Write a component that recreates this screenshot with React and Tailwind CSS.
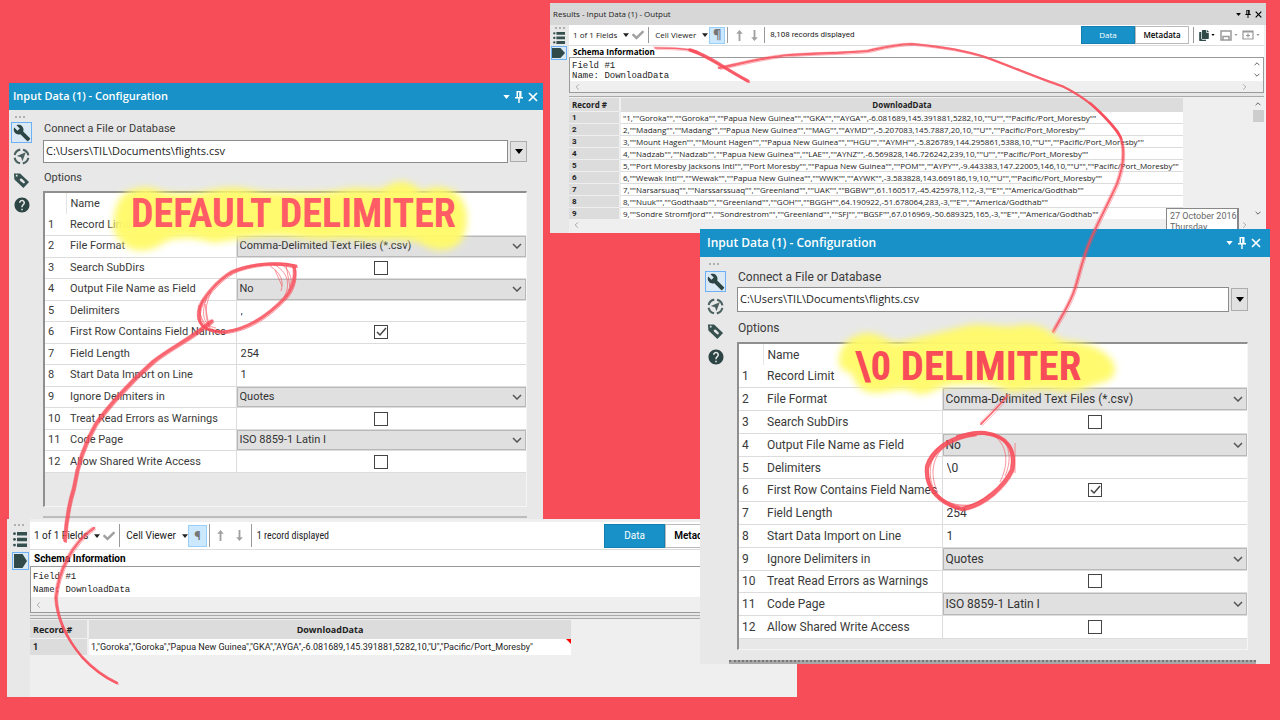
import React from 'react'
import clsx from 'clsx'
import { MdBuild, MdHelp } from 'react-icons/md'
import { FaCopy, FaCheck } from 'react-icons/fa'

const options = [
  { name: 'Record Limit', type: 'text', value: '' },
  { name: 'File Format', type: 'select', value: 'Comma-Delimited Text Files (*.csv)' },
  { name: 'Search SubDirs', type: 'check', value: false },
  { name: 'Output File Name as Field', type: 'select', value: 'No' },
  { name: 'Delimiters', type: 'text', value: ',' },
  { name: 'First Row Contains Field Names', type: 'check', value: true },
  { name: 'Field Length', type: 'text', value: '254' },
  { name: 'Start Data Import on Line', type: 'text', value: '1' },
  { name: 'Ignore Delimiters in', type: 'select', value: 'Quotes' },
  { name: 'Treat Read Errors as Warnings', type: 'check', value: false },
  { name: 'Code Page', type: 'select', value: 'ISO 8859-1 Latin I' },
  { name: 'Allow Shared Write Access', type: 'check', value: false },
]

const allRecords = [
  '"1,""Goroka"",""Goroka"",""Papua New Guinea"",""GKA"",""AYGA"",-6.081689,145.391881,5282,10,""U"",""Pacific/Port_Moresby""',
  '2,""Madang"",""Madang"",""Papua New Guinea"",""MAG"",""AYMD"",-5.207083,145.7887,20,10,""U"",""Pacific/Port_Moresby""',
  '3,""Mount Hagen"",""Mount Hagen"",""Papua New Guinea"",""HGU"",""AYMH"",-5.826789,144.295861,5388,10,""U"",""Pacific/Port_Moresby""',
  '4,""Nadzab"",""Nadzab"",""Papua New Guinea"",""LAE"",""AYNZ"",-6.569828,146.726242,239,10,""U"",""Pacific/Port_Moresby""',
  '5,""Port Moresby Jacksons Intl"",""Port Moresby"",""Papua New Guinea"",""POM"",""AYPY"",-9.443383,147.22005,146,10,""U"",""Pacific/Port_Moresby""',
  '6,""Wewak Intl"",""Wewak"",""Papua New Guinea"",""WWK"",""AYWK"",-3.583828,143.669186,19,10,""U"",""Pacific/Port_Moresby""',
  '7,""Narsarsuaq"",""Narssarssuaq"",""Greenland"",""UAK"",""BGBW"",61.160517,-45.425978,112,-3,""E"",""America/Godthab""',
  '8,""Nuuk"",""Godthaab"",""Greenland"",""GOH"",""BGGH"",64.190922,-51.678064,283,-3,""E"",""America/Godthab""',
  '9,""Sondre Stromfjord"",""Sondrestrom"",""Greenland"",""SFJ"",""BGSF"",67.016969,-50.689325,165,-3,""E"",""America/Godthab""',
]

const oneRecord = [
  '1,"Goroka","Goroka","Papua New Guinea","GKA","AYGA",-6.081689,145.391881,5282,10,"U","Pacific/Port_Moresby"',
]

const Caret = ({ className }) => (
  <svg className={className} viewBox="0 0 8 5" fill="currentColor">
    <path d="M0 0h8L4 5z" />
  </svg>
)

const Chevron = ({ className }) => (
  <svg className={className} viewBox="0 0 10 6" fill="none" stroke="currentColor" strokeWidth="1.5">
    <path d="M1 1l4 4 4-4" />
  </svg>
)

const Pin = ({ className }) => (
  <svg className={className} viewBox="0 0 8 12" fill="currentColor">
    <path d="M1.5 0h5v6H8v1.500H4.700V12H3.300V7.500H0V6h1.500zM3 1.200V6h1.200V1.200z" fillRule="evenodd" />
  </svg>
)

const Cross = ({ className }) => (
  <svg className={className} viewBox="0 0 10 10" fill="none" stroke="currentColor" strokeWidth="1.700">
    <path d="M1 1l8 8M9 1l-8 8" />
  </svg>
)

const Dots = () => (
  <div className="flex gap-[2px] h-[2px]">
    <span className="w-[2px] h-[2px] bg-[#b0b0b0]" />
    <span className="w-[2px] h-[2px] bg-[#b0b0b0]" />
    <span className="w-[2px] h-[2px] bg-[#b0b0b0]" />
  </div>
)

const TargetIcon = () => (
  <svg className="w-[17px] h-[17px]" viewBox="0 0 18 18">
    <circle cx="9" cy="9" r="7.400" fill="none" stroke="#4a6160" strokeWidth="2.200" strokeDasharray="8.600 3" strokeDashoffset="-1.500" />
    <path d="M13.500 4.500L10 14 8.500 9.800 4 8.500z" fill="#4a6160" />
  </svg>
)

const TagIcon = () => (
  <svg className="w-[17px] h-[17px]" viewBox="0 0 18 18">
    <path
      d="M1 1.500L7.500 1.500 17 10.500 11 17 1.500 8zM3 3v1.800h1.800V3zM7 7.800q1.500-2 3 0l2.500 2.600q.5 1.600-1.200 1.800L7.800 9.600z"
      fill="#35504e"
      fillRule="evenodd"
    />
  </svg>
)

const ListIcon = ({ className }) => (
  <svg className={className} viewBox="0 0 14 15" fill="#35504e" preserveAspectRatio="none">
    <path d="M4 0h10v3.500H4zM4 5.700h10v3.500H4zM4 11.400h10v3.500H4z" />
    <circle cx="1.500" cy="1.700" r="1.400" />
    <circle cx="1.500" cy="7.400" r="1.400" />
    <circle cx="1.500" cy="13.100" r="1.400" />
  </svg>
)

const PortIcon = () => (
  <svg className="w-[13px] h-full py-px" viewBox="0 0 13 13" preserveAspectRatio="none">
    <path d="M0 0h8.500L13 6.500 8.500 13H0z" fill="#2f4a49" />
  </svg>
)

const Arrow = ({ up }) => (
  <svg className={clsx('w-[7px] h-[11px]', !up && 'rotate-180')} viewBox="0 0 7 12" fill="#a0a0a0">
    <path d="M3.500 0L7 4H4.500v8h-2V4H0z" />
  </svg>
)

const sizes = {
  sm: {
    title: 'h-[27px] pl-[4px] pr-[5px] text-[11px]',
    body: 'pt-[11px] pr-4 pb-[13px]',
    side: 'w-[34px] pt-[6px] pl-[2px]',
    wrench: 'mt-[4px]',
    tools: 'mt-[5px] gap-[7px]',
    label: 'text-[11px] h-5',
    text: 'text-[11px]',
    path: 'h-[23px]',
    gap: 'h-[28px] pt-[2px]',
    table: 'h-[280px]',
    num: 'w-[21px]',
    name: 'w-[170px]',
    tail: 'h-[33px]',
    rule: 'h-[2px] mt-[9px] bg-[#bdbdbd]',
  },
  lg: {
    title: 'h-[28px] pl-[7px] pr-[9px] text-[12px]',
    body: 'pt-[11px] pr-[22px] pb-0',
    side: 'w-[37px] pt-[6px] pl-[5px]',
    wrench: 'mt-[6px]',
    tools: 'mt-[6px] gap-[8px]',
    label: 'text-[12px] h-5',
    text: 'text-[12px]',
    path: 'h-[25px]',
    gap: 'h-[30px] pt-[2px]',
    table: 'h-[295px]',
    num: 'w-[24px]',
    name: 'w-[179px]',
    tail: 'h-[10px]',
    rule: 'mt-[10px] h-[4px] -mr-2 -ml-2 border-t-2 border-dotted border-[#777] bg-[#a8a8a8]',
  },
}

function OptionValue({ id, option, text }) {
  if (option.type === 'select') {
    return (
      <div className="relative h-full border border-[#b8b8b8] bg-[#e0e0e0]">
        <select id={id} className={clsx('absolute inset-0 w-full h-full pl-[2px] appearance-none bg-transparent text-[#333]', text)}>
          <option>{option.value}</option>
        </select>
        <Chevron className="absolute right-[3px] top-1/2 -translate-y-1/2 w-[10px] h-[6px] text-[#555] pointer-events-none" />
      </div>
    )
  }
  if (option.type === 'check') {
    return (
      <label className="flex items-center justify-center h-full">
        <span className="relative flex">
          <input
            id={id}
            type="checkbox"
            defaultChecked={option.value}
            className="peer w-[14px] h-[14px] appearance-none border border-[#444] bg-white"
          />
          <svg
            className="absolute inset-0 hidden w-[14px] h-[14px] peer-checked:block pointer-events-none"
            viewBox="0 0 14 14"
            fill="none"
            stroke="#444"
            strokeWidth="1.500"
          >
            <path d="M3 7l3 3 6-7" />
          </svg>
        </span>
      </label>
    )
  }
  return <input id={id} type="text" defaultValue={option.value} className={clsx('block w-full pl-[4px] bg-transparent text-[#333]', text)} />
}

function ConfigWindow({ id, size, delimiter, className }) {
  const s = sizes[size]
  return (
    <section className={clsx('absolute bg-[#e8e8e8] font-[Roboto,sans-serif] text-[#3a3a3a]', className)}>
      <header className={clsx('flex items-center justify-between bg-[#1791c7] text-white', s.title)}>
        <h2 className="font-[Open_Sans,sans-serif] font-semibold">Input Data (1) - Configuration</h2>
        <div className="flex items-center gap-[5px]">
          <button aria-label="Menu"><Caret className="w-[7px] h-[4px]" /></button>
          <button aria-label="Pin"><Pin className="w-[8px] h-[12px]" /></button>
          <button aria-label="Close"><Cross className="w-[10px] h-[10px]" /></button>
        </div>
      </header>
      <div className="flex">
        <aside className={clsx('shrink-0 flex flex-col items-start', s.side)}>
          <div className="pl-[4px]"><Dots /></div>
          <button
            aria-label="Configuration"
            className={clsx('w-[21px] h-[21px] flex items-center justify-center border border-[#6cb0f5] bg-[#dbe9f5]', s.wrench)}
          >
            <MdBuild className="w-[18px] h-[18px] text-[#2c4443]" />
          </button>
          <div className={clsx('flex flex-col pl-[2px]', s.tools)}>
            <button aria-label="Navigation"><TargetIcon /></button>
            <button aria-label="Annotation"><TagIcon /></button>
            <button aria-label="Help"><MdHelp className="w-[18px] h-[18px] text-[#2c4443]" /></button>
          </div>
        </aside>
        <div className={clsx('flex-1 min-w-0', s.body)}>
          <label htmlFor={`${id}-path`} className={clsx('block pl-px', s.label)}>Connect a File or Database</label>
          <div className="flex gap-[2px] -mt-px">
            <input
              id={`${id}-path`}
              type="text"
              defaultValue="C:\Users\TIL\Documents\flights.csv"
              className={clsx('flex-1 min-w-0 border border-[#8c8c8c] bg-white px-[2px] pb-[3px] font-[Open_Sans,sans-serif] text-[11px] text-[#222]', s.path)}
            />
            <button aria-label="Browse" className="my-[1px] w-[17px] flex items-center justify-center border border-[#adadad] bg-[#e1e1e1]">
              <Caret className="w-[8px] h-[5px] text-black" />
            </button>
          </div>
          <div className={clsx('flex items-center pl-px', s.gap, s.text)}>Options</div>
          <div className="border-t-2 border-l-2 border-t-[#8f8f8f] border-l-[#8f8f8f] border-r border-b border-r-[#f5f5f5] border-b-[#f5f5f5]">
            <table className={clsx('w-full table-fixed border-collapse bg-white', s.table, s.text)}>
              <colgroup>
                <col className={s.num} />
                <col className={s.name} />
                <col />
              </colgroup>
              <thead>
                <tr>
                  <th className="p-0 h-[21px] border-r border-[#e4e4e4]" />
                  <th className="p-0 pl-[4px] h-[21px] leading-[16px] text-left font-normal">Name</th>
                  <th className="p-0 h-[21px]" />
                </tr>
              </thead>
              <tbody>
                {options.map((option, i) => (
                  <tr key={option.name} className="border-b border-[#dcdcdc]">
                    <td className="p-0 pl-[3px] leading-[16px]">{i + 1}</td>
                    <td className={clsx('p-0 pl-[4px] leading-[16px] whitespace-nowrap', i > 0 && 'border-r border-[#dcdcdc]')}>
                      <label htmlFor={`${id}-${i}`}>{option.name}</label>
                    </td>
                    <td className="p-0 h-[21px] leading-[16px]">
                      <OptionValue
                        id={`${id}-${i}`}
                        option={option.name === 'Delimiters' ? { ...option, value: delimiter } : option}
                        text={s.text}
                      />
                    </td>
                  </tr>
                ))}
              </tbody>
            </table>
            <div className={s.tail} />
          </div>
          <div className={s.rule} />
        </div>
      </div>
    </section>
  )
}

const resultSizes = {
  sm: {
    side: 'w-[19px] pt-[2px]',
    list: 'mt-[3px] -ml-[2px]',
    listIcon: 'w-[12px] h-[12px]',
    port: 'mt-[2px] -ml-[2px] w-[16px] h-[14px]',
    bar: 'h-[20px] text-[8px]',
    menu: 'gap-[6px]',
    pilcrow: 'ml-px w-[16px] h-[17px]',
    arrows: 'pl-[8px] gap-[8px]',
    count: 'ml-[6px] font-[Roboto,sans-serif]',
    tab: 'w-[54px] h-[18px] text-[8px]',
    schema: 'h-[12px] text-[8px]',
    info: 'h-[36px]',
    lines: 'leading-[10px] pt-[3px]',
    scroll: 'h-[11px]',
    table: 'text-[8px]',
    cell: 'font-[Open_Sans,sans-serif]',
    head: 'h-[13px]',
    row: 'h-[12px]',
    num: 'w-[50px]',
    tableWidth: 'w-[614px]',
  },
  lg: {
    side: 'w-[23px] pt-[5px]',
    list: 'mt-[6px] ml-[2px]',
    listIcon: 'w-[14px] h-[15px]',
    port: 'mt-[5px] ml-[4px] w-[17px] h-[18px]',
    bar: 'h-[27px] text-[10px] mt-[3px]',
    menu: 'gap-[6px]',
    pilcrow: 'w-[19px] h-[22px]',
    arrows: 'pl-[7px] gap-[12px]',
    count: 'ml-[8px] font-[Roboto_Condensed,Roboto,sans-serif]',
    tab: 'w-[61px] h-[24px] text-[10px]',
    schema: 'h-[17px] text-[10px]',
    info: 'h-[47px]',
    lines: 'leading-[13px] pt-[4px]',
    scroll: 'h-[15px]',
    table: 'text-[9px]',
    cell: 'font-[Roboto,sans-serif]',
    head: 'h-[18px]',
    row: 'h-[17px]',
    num: 'w-[57px]',
    tableWidth: 'w-[541px]',
  },
}

function ResultsPanel({ size, count, records, children, flagged, scrollbars }) {
  const s = resultSizes[size]
  return (
    <div className="flex flex-1 min-h-0">
      <aside className={clsx('shrink-0 flex flex-col items-center bg-[#e8e8e8]', s.side)}>
        <Dots />
        <button aria-label="List" className={s.list}><ListIcon className={s.listIcon} /></button>
        <button aria-label="Output" className={clsx('flex items-center justify-center border border-[#6cb0f5] bg-[#dbe9f5]', s.port)}>
          <PortIcon />
        </button>
      </aside>
      <div className="flex-1 min-w-0 flex flex-col pr-[2px]">
        <div className={clsx('shrink-0 flex items-center bg-white pl-[4px] text-[#222]', s.bar)}>
          <button className={clsx('flex items-center', s.menu)}>1 of 1 Fields <Caret className="w-[6px] h-[4px]" /></button>
          <FaCheck className="ml-[3px] w-[12px] h-[12px] text-[#a0a0a0]" />
          <button className={clsx('ml-[4px] pl-[6px] self-stretch my-[2px] flex items-center border-l border-[#999]', s.menu)}>
            Cell Viewer <Caret className="w-[6px] h-[4px]" />
          </button>
          <button className={clsx('flex items-center justify-center border border-[#99cff8] bg-[#cce8ff] text-[13px] text-[#777] font-bold', s.pilcrow)}>¶</button>
          <div className={clsx('ml-[2px] self-stretch my-[2px] flex items-center border-l border-[#999]', s.arrows)}>
            <Arrow up />
            <Arrow />
          </div>
          <span className={clsx('pl-[5px] self-stretch my-[2px] flex items-center border-l border-[#999]', s.count)}>{count}</span>
          {children}
        </div>
        <h3 className={clsx('shrink-0 flex items-center bg-white border-t border-[#dcdcdc] pl-[4px] font-bold text-black', s.schema)}>Schema Information</h3>
        <div className={clsx('shrink-0 flex flex-col border border-[#9a9a9a] bg-white', s.info)}>
          <div className="flex flex-1 min-h-0">
            <pre className={clsx('flex-1 pl-[2px] font-[Liberation_Mono,monospace] text-[9px] text-[#222]', s.lines)}>
              {'Field #1\nName: DownloadData'}
            </pre>
            {scrollbars && (
              <div className="w-[12px] flex flex-col items-center justify-around text-[#555]">
                <Chevron className="w-[6px] h-[4px] rotate-180" />
                <Chevron className="w-[6px] h-[4px]" />
              </div>
            )}
          </div>
          <div className={clsx('flex items-center justify-between bg-[#efefef] px-[4px] text-[#aaa]', s.scroll)}>
            <Chevron className="w-[7px] h-[4px] rotate-90" />
            {scrollbars && <Chevron className="w-[7px] h-[4px] -rotate-90 mr-[11px]" />}
          </div>
        </div>
        <div className={clsx('shrink-0 border-[#aaa] bg-[#e6e6e6]', scrollbars ? 'h-[4px] border-b mb-px' : 'h-[6px] border-double border-b-4 mb-px')} />
        <div className="flex justify-between">
          <table className={clsx('table-fixed border-separate border-spacing-0 font-[Roboto,sans-serif] text-[#222]', s.table, s.tableWidth)}>
            <colgroup>
              <col className={s.num} />
              <col />
            </colgroup>
            <thead>
              <tr className={clsx('font-[Open_Sans,sans-serif]', s.head)}>
                <th className="p-0 pl-[3px] text-left leading-none bg-[#dcdcdc]">Record #</th>
                <th className="p-0 leading-none bg-[#dcdcdc] border-l-2 border-[#efefef]">DownloadData</th>
              </tr>
            </thead>
            <tbody>
              {records.map((record, i) => (
                <tr key={i} className={s.row}>
                  <th className="p-0 pl-[3px] text-left leading-none bg-[#dcdcdc] border-t border-[#efefef]">{i + 1}</th>
                  <td className={clsx('relative p-0 pl-[2px] leading-none whitespace-nowrap bg-white border-l-2 border-t border-l-[#efefef] border-t-[#dcdcdc]', s.cell)}>
                    {record}
                    {flagged && (
                      <svg className="absolute top-0 right-0 w-[5px] h-[5px]" viewBox="0 0 5 5">
                        <path d="M0 0h5v5z" fill="#f00" />
                      </svg>
                    )}
                  </td>
                </tr>
              ))}
            </tbody>
          </table>
          {scrollbars && (
            <div className="w-[12px] flex flex-col items-center py-[4px] text-[#555]">
              <Chevron className="w-[6px] h-[4px] rotate-180" />
              <div className="mt-[4px] w-[11px] h-[12px] bg-[#cdcdcd]" />
              <Chevron className="mt-auto w-[6px] h-[4px]" />
            </div>
          )}
        </div>
        {scrollbars && (
          <div className="flex items-center justify-between h-[11px] pl-[4px] pr-[16px] text-[#aaa]">
            <Chevron className="w-[7px] h-[4px] rotate-90" />
            <Chevron className="w-[7px] h-[4px] -rotate-90" />
          </div>
        )}
      </div>
    </div>
  )
}

function Tabs({ size }) {
  const s = resultSizes[size]
  return (
    <div className="ml-auto flex">
      <button className={clsx('bg-[#1791c7] text-white border border-[#1480b0]', s.tab)}>Data</button>
      <button className={clsx('bg-white font-semibold text-black border border-[#bbb]', s.tab)}>Metadata</button>
    </div>
  )
}

function Stroke({ d, width = 3 }) {
  return (
    <g fill="none" stroke="#f84c59" strokeLinecap="round">
      <path d={d} strokeWidth={width} opacity="0.85" />
      <path d={d} strokeWidth={width / 3} opacity="0.6" transform="translate(1.500 1.500)" />
      <path d={d} strokeWidth={width / 3} opacity="0.5" transform="translate(-1.500 -1)" />
    </g>
  )
}

function Scribbles() {
  return (
    <svg className="absolute inset-0 w-[1280px] h-[720px] pointer-events-none" viewBox="0 0 1280 720">
      <defs>
        <filter id="soft" x="-10%" y="-30%" width="120%" height="160%">
          <feGaussianBlur stdDeviation="3.500" />
        </filter>
      </defs>
      {/* left circle and its tail */}
      <Stroke width={3} d="M296 266C275 261 248 265 232 272C217 281 204 297 200 307C195 325 205 332 225 332C250 329 270 314 286 297C294 287 296 276 294 266" />
      <g fill="none" stroke="#f84c59" strokeWidth="1" opacity="0.6">
        <path d="M203 299C197 312 201 326 212 330M207 297C200 315 204 326 216 328M211 292C203 310 206 320 210 327M199 305C200 320 205 328 222 333M205 304l4 22M273 264C288 271 291 285 284 297M280 263C293 272 293 283 288 291M270 266C281 273 284 281 281 291M286 265l4 22M275 270l7 16M230 275C250 264 270 262 294 268" />
      </g>
      <Stroke width={3.2} d="M212 321C190 340 170 348 153 362C130 382 108 407 96 424C82 448 76 475 74 488C69 504 66 523 65 541" />
      <Stroke width={2.6} d="M94 528C72 543 58 572 56 598C57 617 66 638 82 657C94 670 104 677 117 683" />
      {/* right line */}
      <Stroke width={1.6} d="M655 48C672 48 690 49 698 52" />
      <Stroke width={3.4} d="M690 50C708 55 725 69 748 81" />
      <Stroke width={2.2} d="M719 68C740 64 765 57 790 55C820 53 850 53 868 51C882 48 890 45 912 44C935 46 965 50 988 58C1015 68 1043 80 1062 86C1085 97 1105 115 1118 132C1126 146 1124 165 1117 184C1107 206 1098 222 1090 241C1081 262 1078 282 1073 294C1067 309 1060 319 1053 332" />
      <Stroke width={2.4} d="M1090 103C1103 115 1115 127 1121 138" />
      <Stroke width={1.8} d="M1008 395C1000 405 990 415 981 424" />
      {/* right circle */}
      <Stroke width={4} d="M975 434C950 437 932 450 927 467C925 489 940 504 962 509C985 505 1005 485 1012 470C1016 450 1008 436 985 433C978 432 968 434 958 437" />
      <g fill="none" stroke="#f84c59" strokeWidth="1" opacity="0.6">
        <path d="M944 443C930 453 926 476 935 491M948 443C932 456 929 474 938 493M1000 436C1010 446 1012 460 1005 476M992 434C1007 444 1010 462 1000 482M1015 443v30M930 485C940 503 955 506 972 505M936 492C950 508 970 512 990 494" />
      </g>
      {/* highlighter */}
      <g fill="#fffa6a" opacity="0.97" filter="url(#soft)">
        <path d="M114 220C115 202 122 190 140 188C152 185 160 193 172 193C195 196 215 188 225 188C240 186 250 190 265 192C290 192 320 195 345 189C365 186 375 192 385 187C400 177 412 182 422 191C435 184 452 186 460 197C470 210 468 228 462 240C452 254 432 252 420 243C400 237 385 242 365 240C340 237 325 242 300 238C270 234 240 238 215 243C195 238 180 236 165 242C150 254 130 253 122 242C114 236 112 228 114 220Z" />
        <path d="M839 360C839 345 852 334 867 333C880 332 888 343 900 342C925 336 945 331 965 326C985 321 1000 330 1020 325C1040 322 1050 332 1062 340C1082 342 1100 346 1112 360C1119 372 1113 381 1100 383C1088 386 1080 393 1062 392C1045 387 1030 391 1010 392C990 382 975 384 950 385C935 388 925 399 912 392C900 385 885 396 868 392C850 386 858 373 845 371C840 368 838 365 839 360Z" />
      </g>
    </svg>
  )
}

export default function App() {
  return (
    <main className="relative min-h-screen overflow-hidden bg-[#f74d59]">
      <ConfigWindow id="default" size="sm" delimiter="," className="left-[9px] top-[83px] w-[534px]" />

      <section className="absolute left-[7px] top-[519px] w-[790px] h-[178px] flex bg-[#efefef] font-[Roboto,sans-serif]">
        <ResultsPanel size="lg" count="1 record displayed" records={oneRecord} flagged>
          <Tabs size="lg" />
          <span className="w-[69px]" />
        </ResultsPanel>
      </section>

      <section className="absolute left-[550px] top-[3px] w-[716px] h-[230px] flex flex-col bg-[#efefef] font-[Open_Sans,sans-serif]">
        <header className="h-[22px] shrink-0 flex items-center justify-between pl-[3px] pr-[4px] bg-[#d7d7d7] text-[8px] text-[#222]">
          <h2>Results - Input Data (1) - Output</h2>
          <div className="flex items-center gap-[4px] text-black">
            <button aria-label="Menu"><Caret className="w-[5px] h-[3px]" /></button>
            <button aria-label="Pin"><Pin className="w-[6px] h-[8px]" /></button>
            <button aria-label="Close"><Cross className="w-[7px] h-[7px]" /></button>
          </div>
        </header>
        <ResultsPanel size="sm" count="8,108 records displayed" records={allRecords} scrollbars>
          <Tabs size="sm" />
          <div className="ml-[4px] pl-[5px] pr-[4px] self-stretch my-[2px] flex items-center gap-[2px] border-l border-[#999] text-[#999]">
            <FaCopy className="w-[10px] h-[11px] text-[#2f4a49]" />
            <Caret className="w-[4px] h-[2px] text-black" />
            <svg className="ml-[3px] w-[12px] h-[11px]" viewBox="0 0 12 11" fill="none" stroke="currentColor" strokeWidth="1.500">
              <path d="M1 1h10v9H1zM3 10V6.500h6V10" />
            </svg>
            <Caret className="w-[4px] h-[2px]" />
            <svg className="ml-[2px] w-[12px] h-[10px]" viewBox="0 0 12 10" fill="none" stroke="currentColor" strokeWidth="1.200">
              <path d="M1 1h10v8H1zM1 2h10M6 3.500v4M4 5.500h4" />
            </svg>
            <Caret className="w-[4px] h-[2px]" />
          </div>
        </ResultsPanel>
        <div className="absolute right-[27px] bottom-[-7px] w-[73px] h-[32px] border border-r-2 border-[#888] bg-white pl-[3px] pt-[2px] font-[Roboto,sans-serif] text-[9px] leading-[11px] whitespace-nowrap text-[#666]">
          <p>27 October 2016</p>
          <p>Thursday</p>
        </div>
      </section>

      <ConfigWindow id="null" size="lg" delimiter="\0" className="left-[700px] top-[229px] w-[570px]" />

      <Scribbles />
      <h1 className="absolute left-[131px] top-[191px] font-['Roboto_Condensed','Liberation_Sans_Narrow','Liberation_Sans',sans-serif] font-bold text-[40px] leading-[46px] whitespace-nowrap text-[#ff5c66]">
        DEFAULT DELIMITER
      </h1>
      <h1 className="absolute left-[855px] top-[343px] font-['Roboto_Condensed','Liberation_Sans_Narrow','Liberation_Sans',sans-serif] font-bold text-[41px] leading-[46px] whitespace-nowrap text-[#f84c59]">
        \0 DELIMITER
      </h1>
    </main>
  )
}
